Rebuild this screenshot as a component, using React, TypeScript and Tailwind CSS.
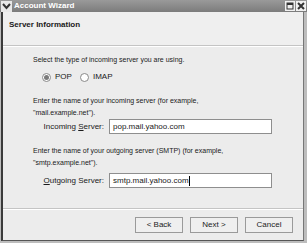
import React from 'react';

/* Account Wizard — server information page */

const FONT = { fontFamily: '"Liberation Sans", Arial, sans-serif' };

function Radio({ checked, label }: { checked?: boolean; label: string }) {
  return (
    <label className="flex items-center gap-[4px] h-[10px]">
      <span className="w-[9px] h-[9px] rounded-full border border-[#8a8a8a] bg-white flex items-center justify-center">
        {checked && <span className="w-[5px] h-[5px] rounded-full bg-[#7a7a7a]" />}
      </span>
      <span>{label}</span>
    </label>
  );
}

function Field({ label, mnemonic, value, caret }: { label: string; mnemonic: number; value: string; caret?: boolean }) {
  return (
    <div className="flex items-center h-[15px]">
      <span className="w-[106px] text-right pr-[5px]">
        {label.slice(0, mnemonic)}
        <span className="underline">{label[mnemonic]}</span>
        {label.slice(mnemonic + 1)}
      </span>
      <div className="w-[163px] h-[15px] bg-white border border-[#8e8e8e] flex items-center px-[3px]">
        <span>{value}</span>
        {caret && <span className="w-px h-[10px] bg-black" />}
      </div>
    </div>
  );
}

function Button({ children }: { children: React.ReactNode }) {
  return (
    <button className="w-[48px] h-[16px] border border-[#9a9a9a] bg-[#efefef] text-[8px] text-[#222] flex items-center justify-center">
      {children}
    </button>
  );
}

export default function App() {
  return (
    <div className="w-[307px] h-[243px] bg-[#bdbdbd] flex flex-col text-[8px] text-[#1a1a1a]" style={FONT}>
      {/* title bar */}
      <div className="h-[12px] flex items-center bg-gradient-to-b from-[#9a9a9a] to-[#7c7c7c]">
        <svg width="11" height="11" viewBox="0 0 11 11" className="ml-[1px]">
          <rect width="11" height="11" fill="#e8e8e8" />
          <path d="M2 3 L5.5 7 L9 3" stroke="#333" strokeWidth="2" fill="none" />
        </svg>
        <span className="ml-[2px] text-white font-bold text-[8px]">Account Wizard</span>
        <div className="ml-auto flex gap-[1px] mr-[1px]">
          <svg width="10" height="10" viewBox="0 0 10 10">
            <rect width="10" height="10" fill="#f0f0f0" />
            <rect x="2" y="2" width="6" height="6" fill="none" stroke="#333" />
            <rect x="2" y="2" width="6" height="2" fill="#333" />
          </svg>
          <svg width="10" height="10" viewBox="0 0 10 10">
            <rect width="10" height="10" fill="#f0f0f0" />
            <path d="M2 2 L8 8 M8 2 L2 8" stroke="#333" strokeWidth="2" />
          </svg>
        </div>
      </div>

      {/* body */}
      <div className="flex-1 flex ml-[1px] mr-[3px] mb-[2px] border-l-2 border-l-[#3a3a3a] border-b border-b-[#555] border-r border-r-[#777] bg-[#ececec] flex-col">
        <div className="h-[34px] bg-[#efefef] border-b border-[#c4c4c4] px-[6px] pt-[7px] font-bold text-[8px]">
          Server Information
        </div>
        <div className="border-t border-white flex-1 flex flex-col text-[7px]">
          <div className="pl-[30px] pt-[7px] flex flex-col">
            <p className="leading-[12px]">Select the type of incoming server you are using.</p>
            <div className="flex gap-[8px] pl-[9px] mt-[6px] text-[8px]">
              <Radio checked label="POP" />
              <Radio label="IMAP" />
            </div>
            <p className="mt-[13px] leading-[12px]">
              Enter the name of your incoming server (for example,
              <br />
              "mail.example.net").
            </p>
          </div>
          <div className="mt-0 text-[8px]">
            <Field label="Incoming Server:" mnemonic={9} value="pop.mail.yahoo.com" />
          </div>
          <p className="pl-[30px] mt-[11px] leading-[12px]">
            Enter the name of your outgoing server (SMTP) (for example,
            <br />
            "smtp.example.net").
          </p>
          <div className="mt-[4px] text-[8px]">
            <Field label="Outgoing Server:" mnemonic={0} value="smtp.mail.yahoo.com" caret />
          </div>
          <div className="mt-auto border-t border-[#c4c4c4]">
            <div className="border-t border-white flex justify-end gap-[7px] pr-[10px] pt-[7px] pb-[7px]">
              <Button>&lt; Back</Button>
              <Button>Next &gt;</Button>
              <Button>Cancel</Button>
            </div>
          </div>
        </div>
      </div>
    </div>
  );
}
